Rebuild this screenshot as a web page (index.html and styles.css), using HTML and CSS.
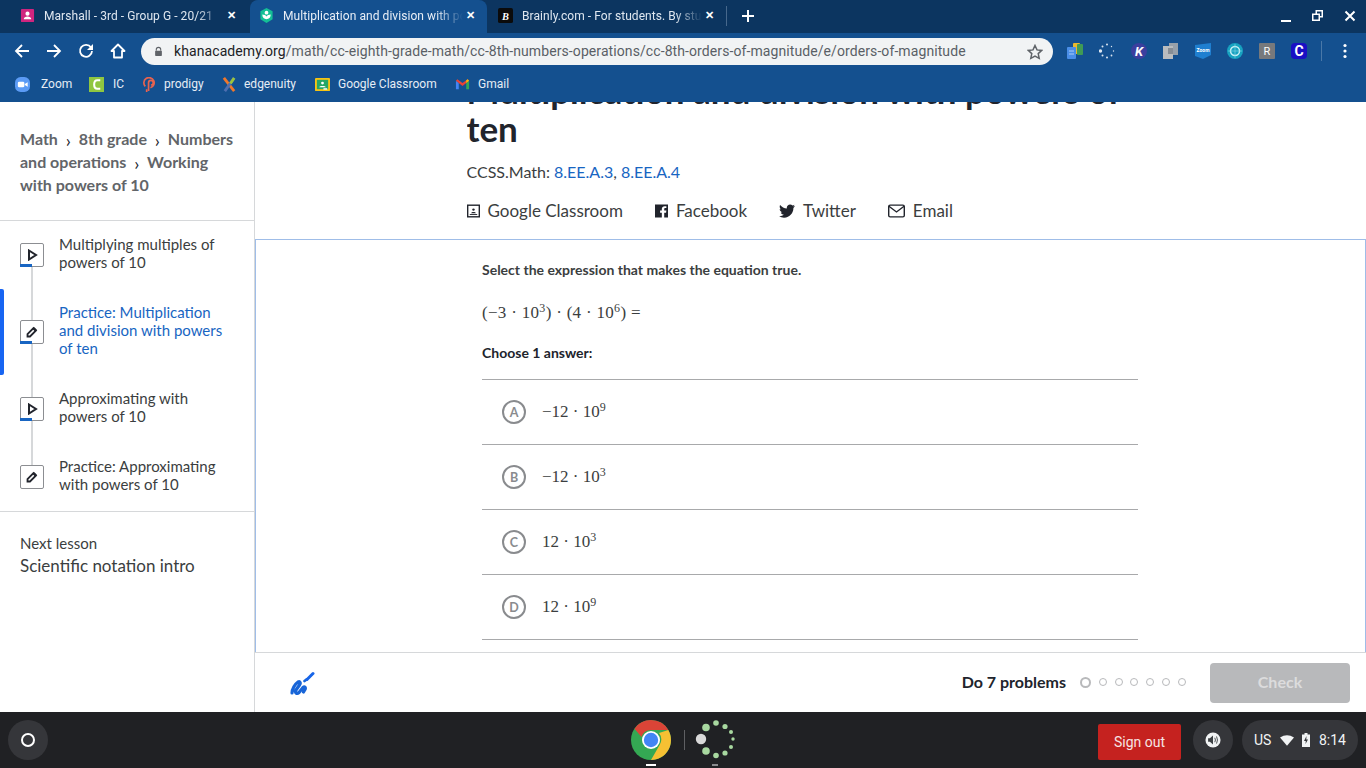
FILE: index.html
```html
<!DOCTYPE html>
<html lang="en">
<head>
  <meta charset="UTF-8">
  <title>Multiplication and division with powers of ten</title>
  <link rel="stylesheet" href="styles.css">
</head>
<body>
  <header class="browser">
    <div class="tabStrip">
      <div class="tab tabFirst">
        <svg class="favicon" viewBox="0 0 16 16"><rect x="1" y="1" width="14" height="14" rx="1" fill="#d0257f"/><circle cx="8" cy="6" r="2.2" fill="#fff"/><path d="M4 12c0-2 2-3 4-3s4 1 4 3z" fill="#fff"/></svg>
        <span class="tabTitle">Marshall - 3rd - Group G - 20/21</span>
        <span class="tabClose">✕</span>
      </div>
      <div class="tab tabActive">
        <svg class="favicon" viewBox="0 0 16 16"><path d="M8 0l6.500 3.500v8.500L8 16l-6.500-4V3.500z" fill="#14bf96"/><circle cx="8" cy="5" r="2" fill="#fff"/><path d="M3.500 7c0 3 2 5 4.500 5s4.500-2 4.500-5c-2 0-4 1-4.500 2-.5-1-2.500-2-4.500-2z" fill="#fff"/></svg>
        <span class="tabTitle">Multiplication and division with powers of ten</span>
        <span class="tabClose">✕</span>
      </div>
      <div class="tab tabLast">
        <svg class="favicon" viewBox="0 0 16 16"><rect width="16" height="16" rx="2" fill="#0b0b0b"/><text x="8" y="12.500" class="faviconLetter">B</text></svg>
        <span class="tabTitle">Brainly.com - For students. By students.</span>
        <span class="tabClose">✕</span>
      </div>
      <span class="tabDivider"></span>
      <svg class="newTab" viewBox="0 0 14 14"><path d="M7 1v12M1 7h12" stroke="#fff" stroke-width="2"/></svg>
      <div class="windowControls">
        <svg class="minimize" viewBox="0 0 12 12"><path d="M1 11h10" stroke="#fff" stroke-width="2"/></svg>
        <svg viewBox="0 0 12 12"><path d="M3.500 0H11v7.500H8V11H0V3.500h3.500zM5 1.500v2h3v2.500h1.500V1.500zM1.500 5v4.500h5V5z" fill="#fff" fill-rule="evenodd"/></svg>
        <svg viewBox="0 0 12 12"><path d="M1.500 1.500l9 9M10.500 1.500l-9 9" stroke="#fff" stroke-width="2"/></svg>
      </div>
    </div>

    <div class="toolbar">
      <div class="navButtons">
        <svg viewBox="0 0 16 16"><path d="M15 8H2M8 2L2 8l6 6" fill="none" stroke="#fff" stroke-width="1.800"/></svg>
        <svg viewBox="0 0 16 16"><path d="M1 8h13M8 2l6 6-6 6" fill="none" stroke="#fff" stroke-width="1.800"/></svg>
        <svg viewBox="0 0 16 16"><path d="M13 4.500A6 6 0 1 0 14 8" fill="none" stroke="#fff" stroke-width="1.800"/><path d="M15 1v6H9z" fill="#fff"/></svg>
        <svg viewBox="0 0 16 16"><path d="M8 1.500L1.500 8H4v6.500h8V8h2.500z" fill="none" stroke="#fff" stroke-width="1.800" stroke-linejoin="round"/></svg>
      </div>
      <div class="addressBar">
        <svg class="lock" viewBox="0 0 12 14"><path d="M3 6V4.500a3 3 0 0 1 6 0V6" fill="none" stroke="#5f6368" stroke-width="1.400"/><rect x="1.500" y="6" width="9" height="7" rx="1" fill="#5f6368"/></svg>
        <span class="url"><b>khanacademy.org</b>/math/cc-eighth-grade-math/cc-8th-numbers-operations/cc-8th-orders-of-magnitude/e/orders-of-magnitude</span>
        <svg class="star" viewBox="0 0 16 16"><path d="M8 1.500l2 4.400 4.800.5-3.600 3.200 1 4.700L8 12l-4.200 2.300 1-4.700L1.200 6.400 6 5.900z" fill="none" stroke="#5f6368" stroke-width="1.500"/></svg>
      </div>
      <div class="extensions">
        <svg viewBox="0 0 16 16"><rect x="6" y="0" width="7" height="11" rx="1" fill="#e8b92e"/><rect x="10" y="1" width="6" height="11" rx="1" fill="#3f9a55"/><rect x="0" y="4" width="9" height="12" rx="1" fill="#4a8ee8"/><path d="M2 8h5M2 11h5" stroke="#a9c9f5"/></svg>
        <svg viewBox="0 0 16 16"><g fill="#dbe5f0"><circle cx="8" cy="1.500" r="1"/><circle cx="12.500" cy="3.500" r=".7"/><circle cx="14.500" cy="8" r=".7"/><circle cx="12.500" cy="12.500" r=".9"/><circle cx="8" cy="14.500" r="1"/><circle cx="3.500" cy="12.500" r="1"/><circle cx="1.500" cy="8" r="1.700"/><circle cx="3.500" cy="3.500" r="1"/></g></svg>
        <svg viewBox="0 0 16 16"><circle cx="8" cy="8" r="8" fill="#3b3f9e"/><text x="8" y="13" class="extLetter extItalic">K</text></svg>
        <svg viewBox="0 0 16 16"><rect x="6" y="0" width="9" height="12" fill="#97a0aa"/><rect x="0" y="3" width="10" height="13" fill="#b9bcbf"/><rect x="5" y="5" width="5" height="6" fill="#868d95"/></svg>
        <svg viewBox="0 0 16 16"><path d="M0 2l16-2v12l-8 4-8-3z" fill="#1f7fd0"/><text x="8" y="9" class="extTiny">Zoom</text></svg>
        <svg viewBox="0 0 16 16"><circle cx="8" cy="8" r="8" fill="#17a2c0"/><circle cx="8" cy="8" r="4.500" fill="none" stroke="#c6eef5" stroke-width="1.500"/><path d="M8 1v14M1 8h14" stroke="#7fd6e6" stroke-width=".6"/></svg>
        <svg viewBox="0 0 16 16"><rect width="16" height="16" rx="1" fill="#77797c"/><text x="8" y="12" class="extLetter">R</text></svg>
        <svg viewBox="0 0 16 16"><rect width="16" height="16" rx="4" fill="#1a0fc4"/><text x="8" y="13" class="extLetter extBold">C</text></svg>
      </div>
      <span class="toolbarDivider"></span>
      <svg class="menuDots" viewBox="0 0 4 16"><circle cx="2" cy="2.500" r="1.600" fill="#fff"/><circle cx="2" cy="8" r="1.600" fill="#fff"/><circle cx="2" cy="13.500" r="1.600" fill="#fff"/></svg>
    </div>

    <div class="bookmarks">
      <a class="bookmark bmZoom"><svg viewBox="0 0 16 16"><rect width="16" height="16" rx="6" fill="#5b9bf5"/><rect x="3" y="5" width="7" height="6" rx="1.500" fill="#fff"/><path d="M10.500 7.500l3-2v5l-3-2z" fill="#fff"/></svg>Zoom</a>
      <a class="bookmark bmIc"><svg viewBox="0 0 16 16"><rect width="16" height="16" fill="#8fc641"/><path d="M12 3.500H9Q5.500 3.500 5.500 8T9 12.500h3" fill="none" stroke="#fff" stroke-width="2.200"/></svg>IC</a>
      <a class="bookmark bmProdigy"><svg viewBox="0 0 16 16"><path d="M5 16V13M3.500 10A5.500 5.500 0 1 1 9 11.500" fill="none" stroke="#e8634f" stroke-width="1.800"/><path d="M7 15V6a2.500 2.500 0 1 1 2.500 2.500" fill="none" stroke="#e8634f" stroke-width="1.800"/></svg>prodigy</a>
      <a class="bookmark bmEdgenuity"><svg viewBox="0 0 16 16"><path d="M2 1l11 14" stroke="#f0772b" stroke-width="3"/><path d="M13 1L3 15" stroke="#4f6fb0" stroke-width="3"/><path d="M13 1L9 7" stroke="#9ac43c" stroke-width="3"/></svg>edgenuity</a>
      <a class="bookmark bmClassroom"><svg viewBox="0 0 16 16"><rect y="1" width="16" height="14" rx="1" fill="#f7c313"/><rect x="2" y="3" width="12" height="10" fill="#25a667"/><circle cx="8" cy="6.500" r="1.500" fill="#fff"/><path d="M4.500 11c0-2 7-2 7 0z" fill="#fff"/><rect x="9" y="12" width="4" height="1.500" fill="#fff"/></svg>Google Classroom</a>
      <a class="bookmark bmGmail"><svg viewBox="0 0 16 16"><path d="M1 13V4l3 2.500V13z" fill="#4285f4"/><path d="M12 13V6.500L15 4v9z" fill="#34a853"/><path d="M1 4l7 5.500L15 4l-1.500-1.500L8 6.500 2.500 2.500z" fill="#ea4335"/><path d="M12 6.500L15 4l-1.500-1.500L12 3.500z" fill="#fbbc04"/></svg>Gmail</a>
    </div>
  </header>

  <div class="page">
    <aside class="sidebar">
      <nav class="crumbs">Math <span class="crumbSep">›</span> 8th grade <span class="crumbSep">›</span> Numbers and operations <span class="crumbSep">›</span> Working with powers of 10</nav>
      <ul class="lessons">
        <li class="lesson lessonFirst">
          <span class="lessonIcon lessonProgress"><svg viewBox="0 0 12 12"><path d="M3 1.500L10 6l-7 4.500z" fill="none" stroke="#21242c" stroke-width="2"/></svg></span>
          <span>Multiplying multiples of powers of 10</span>
        </li>
        <li class="lesson lessonCurrent">
          <span class="lessonIcon lessonProgress"><svg viewBox="0 0 12 12"><path d="M1.500 10.500V8l6-6 2.500 2.500-6 6z" fill="none" stroke="#21242c" stroke-width="1.800"/><path d="M6.500 3L9 5.500 10.800 3.700 8.300 1.200z" fill="#21242c"/></svg></span>
          <span>Practice: Multiplication and division with powers of ten</span>
        </li>
        <li class="lesson">
          <span class="lessonIcon lessonProgress"><svg viewBox="0 0 12 12"><path d="M3 1.500L10 6l-7 4.500z" fill="none" stroke="#21242c" stroke-width="2"/></svg></span>
          <span>Approximating with powers of 10</span>
        </li>
        <li class="lesson lessonLast">
          <span class="lessonIcon"><svg viewBox="0 0 12 12"><path d="M1.500 10.500V8l6-6 2.500 2.500-6 6z" fill="none" stroke="#21242c" stroke-width="1.800"/><path d="M6.500 3L9 5.500 10.800 3.700 8.300 1.200z" fill="#21242c"/></svg></span>
          <span>Practice: Approximating with powers of 10</span>
        </li>
      </ul>
      <div class="nextLesson">
        <div class="nextLabel">Next lesson</div>
        <div class="nextTitle">Scientific notation intro</div>
      </div>
    </aside>

    <main class="content">
      <div class="intro">
        <h1 class="title">Multiplication and division with powers of ten</h1>
        <p class="standards">CCSS.Math: <a>8.EE.A.3</a>, <a>8.EE.A.4</a></p>
        <div class="share">
          <a class="shareLink"><svg viewBox="0 0 14 14"><rect x=".75" y=".75" width="12.500" height="12.500" fill="none" stroke="#21242c" stroke-width="1.500"/><circle cx="7" cy="5.500" r="1.300" fill="#21242c"/><path d="M4.500 9.500c0-2 5-2 5 0z" fill="#21242c"/><path d="M3 10.800h8" stroke="#21242c"/></svg>Google Classroom</a>
          <a class="shareLink"><svg viewBox="1 1 12 12"><path d="M1 1h12v12H9.500V8.500h1.700l.3-2H9.500V5.300c0-.6.3-1 1-1h1V2.500H10C8.300 2.500 7.300 3.600 7.300 5.200v1.300H5.700v2h1.600V13H1z" fill="#21242c"/></svg>Facebook</a>
          <a class="shareLink shareTwitter"><svg viewBox="0 0 16 14"><path d="M16 2c-.6.3-1.200.4-1.900.5.700-.4 1.200-1 1.400-1.800-.6.400-1.300.6-2 .8C12.900.9 12 .5 11.100.5 9.300.5 7.800 2 7.800 3.800c0 .3 0 .5.100.8C5.200 4.400 2.700 3.100 1.100 1.100c-.3.500-.4 1-.4 1.700 0 1.100.6 2.100 1.500 2.700-.5 0-1-.2-1.500-.4 0 1.600 1.100 2.900 2.600 3.200-.5.100-1 .2-1.500.1.400 1.300 1.600 2.200 3.100 2.300-1.400 1-3 1.600-4.900 1.400C1.500 13.100 3.300 13.700 5 13.700c6 0 9.400-5 9.400-9.400v-.4c.6-.5 1.200-1.100 1.600-1.900z" fill="#21242c"/></svg>Twitter</a>
          <a class="shareLink shareEmail"><svg viewBox="0 0 18 14"><rect x=".75" y=".75" width="16.500" height="12.500" rx="1.500" fill="none" stroke="#21242c" stroke-width="1.500"/><path d="M1 2l8 6 8-6" fill="none" stroke="#21242c" stroke-width="1.500"/></svg>Email</a>
        </div>
      </div>

      <section class="exercise">
        <div class="problem">
          <p class="prompt">Select the expression that makes the equation true.</p>
          <p class="math equation">(−3 · 10<sup>3</sup>) · (4 · 10<sup>6</sup>) =</p>
          <p class="prompt choosePrompt">Choose 1 answer:</p>
          <ul class="choices">
            <li class="choice"><span class="choiceLetter">A</span><span class="math">−12 · 10<sup>9</sup></span></li>
            <li class="choice"><span class="choiceLetter">B</span><span class="math">−12 · 10<sup>3</sup></span></li>
            <li class="choice"><span class="choiceLetter">C</span><span class="math">12 · 10<sup>3</sup></span></li>
            <li class="choice"><span class="choiceLetter">D</span><span class="math">12 · 10<sup>9</sup></span></li>
          </ul>
        </div>
      </section>

      <footer class="taskBar">
        <svg class="scratchpad" viewBox="0 0 26 26"><path d="M3 23C3 19 6 14 9 12c2-1 3 1 1.500 3L7 20c-1.500 3 1 4.500 3 2.500l4-5c1.500-1.500 3 0 2 2L14.500 22" fill="none" stroke="#1865d8" stroke-width="3.200" stroke-linecap="round" stroke-linejoin="round"/><path d="M15.500 11l2-1.500" stroke="#1865d8" stroke-width="2.800" stroke-linecap="round"/><path d="M18 9.500l6-6" stroke="#1865e8" stroke-width="3" stroke-linecap="round"/></svg>
        <strong class="taskLabel">Do 7 problems</strong>
        <div class="dots">
          <span class="dot dotCurrent"></span><span class="dot"></span><span class="dot"></span><span class="dot"></span><span class="dot"></span><span class="dot"></span><span class="dot"></span>
        </div>
        <button class="checkButton">Check</button>
      </footer>
    </main>
  </div>

  <footer class="shelf">
    <div class="shelfLeft"><span class="launcher"><span class="launcherRing"></span></span></div>
    <div class="shelfApps">
      <span class="shelfApp appActive">
        <svg viewBox="0 0 40 40"><circle cx="20" cy="20" r="20" fill="#34a853"/><path d="M20 0a20 20 0 0 1 17.300 10H20a10 10 0 0 0-9.500 7L3.500 8.700A20 20 0 0 1 20 0z" fill="#db4437"/><path d="M37.300 10A20 20 0 0 1 20 40l8.600-15A10 10 0 0 0 28 13z" fill="#f6c033"/><circle cx="20" cy="20" r="9" fill="#fff"/><circle cx="20" cy="20" r="7.200" fill="#4285f4"/></svg>
      </span>
      <span class="shelfDivider"></span>
      <span class="shelfApp appSpinner">
        <svg viewBox="0 0 40 40"><g fill="#a8d8a0"><circle cx="21" cy="3" r="2.800"/><circle cx="30" cy="6.500" r="2.600"/><circle cx="36" cy="12" r="2"/><circle cx="38" cy="19" r="1.700"/><circle cx="36" cy="27" r="2"/><circle cx="30" cy="33" r="2.600"/><circle cx="21" cy="35.500" r="2.800"/><circle cx="11" cy="31" r="3.800"/><circle cx="11" cy="7.500" r="3.800"/></g><circle cx="6" cy="19" r="5.200" fill="#d9d9d9"/></svg>
      </span>
    </div>
    <div class="shelfTray">
      <button class="signOut">Sign out</button>
      <span class="trayRound"><svg viewBox="0 0 18 18"><circle cx="9" cy="9" r="8.500" fill="#f1f3f4"/><path d="M3.500 7h2l3.500-3v10l-3.500-3h-2z" fill="#3c4043"/><path d="M11 6.500q1.500 2.500 0 5M13 5q2 4 0 8" fill="none" stroke="#3c4043"/></svg></span>
      <div class="trayStatus">
        <span>US</span>
        <svg class="trayWifi" viewBox="0 0 16 12"><path d="M0 2.500Q8-2.500 16 2.500L8 12z" fill="#f1f3f4"/></svg>
        <svg class="trayBattery" viewBox="0 0 8 14"><path d="M2.500 0h3v1.500H8V14H0V1.500h2.500z" fill="#f1f3f4"/><path d="M4.500 3L2 8h1.800l-.3 3L6 6.500H4.300z" fill="#35363a"/></svg>
        <span>8:14</span>
      </div>
    </div>
  </footer>
</body>
</html>
```

FILE: styles.css
```css
* {
  box-sizing: border-box;
  margin: 0;
  padding: 0;
}
body {
  width: 1366px;
  height: 768px;
  overflow: hidden;
  display: flex;
  flex-direction: column;
  background-color: #fff;
  font-family: Lato, "Noto Sans", sans-serif;
  color: #21242c;
}
ul {
  list-style: none;
}
svg {
  display: block;
  flex-shrink: 0;
}

/* browser chrome */
.browser {
  flex: 0 0 102px;
  background-color: #14508f;
  font-family: Roboto, sans-serif;
  color: #fff;
  position: relative;
  z-index: 2;
}
.tabStrip {
  height: 33px;
  display: flex;
  align-items: center;
  background-color: #0c3560;
}
.tab {
  height: 33px;
  width: 238px;
  padding: 0 12px 2px 20px;
  display: flex;
  align-items: center;
  font-size: 12px;
  letter-spacing: .06px;
  color: #dfe7f0;
}
.tabFirst {
  width: 250px;
  padding-right: 10px;
}
.tabActive {
  width: 237px;
  padding: 0 8px 2px 9px;
  background-color: #14508f;
  border-radius: 8px 8px 0 0;
  color: #e8eef6;
}
.tabLast {
  width: 239px;
  padding: 0 8px 2px 11px;
}
.favicon {
  width: 15px;
  height: 15px;
  margin-right: 9px;
}
.faviconLetter {
  font: italic 700 11px "Liberation Serif", serif;
  fill: #fff;
  text-anchor: middle;
}
.tabTitle {
  flex: 1;
  overflow: hidden;
  white-space: nowrap;
  -webkit-mask-image: linear-gradient(to right, #000 85%, transparent);
  mask-image: linear-gradient(to right, #000 85%, transparent);
}
.tabClose {
  width: 16px;
  text-align: center;
  font-size: 11px;
  font-weight: 700;
  color: #fff;
}
.tabDivider {
  width: 1px;
  height: 20px;
  margin-bottom: 2px;
  background-color: #47688c;
}
.newTab {
  width: 14px;
  height: 14px;
  margin: 0 0 2px 14px;
}
.windowControls {
  margin-left: auto;
  padding: 0 10px 2px 0;
  display: flex;
  gap: 20px;
}
.windowControls svg {
  width: 12px;
  height: 12px;
}

.toolbar {
  height: 37px;
  padding-bottom: 1px;
  display: flex;
  align-items: center;
}
.navButtons {
  width: 141px;
  padding-left: 14px;
  display: flex;
  gap: 16px;
}
.navButtons svg {
  width: 16px;
  height: 16px;
}
.addressBar {
  width: 912px;
  height: 27px;
  margin-top: 1px;
  padding: 0 10px 0 13px;
  display: flex;
  align-items: center;
  background-color: #f1f3f4;
  border-radius: 14px;
  font-size: 14px;
  letter-spacing: .09px;
  color: #5a5f66;
}
.lock {
  width: 9px;
  height: 11px;
  margin-right: 11px;
}
.url {
  flex: 1;
  padding-bottom: 1px;
  white-space: nowrap;
  overflow: hidden;
}
.url b {
  font-weight: 400;
  color: #202124;
}
.star {
  width: 16px;
  height: 16px;
}
.extensions {
  margin-left: 14px;
  display: flex;
  gap: 16px;
}
.extensions svg {
  width: 16px;
  height: 16px;
}
.extLetter {
  font: 400 11px Roboto, sans-serif;
  fill: #fff;
  text-anchor: middle;
}
.extItalic {
  font-weight: 700;
  font-style: italic;
  font-size: 13px;
}
.extBold {
  font-weight: 700;
  font-size: 14px;
}
.extTiny {
  font: 700 5px Roboto, sans-serif;
  fill: #fff;
  text-anchor: middle;
}
.toolbarDivider {
  width: 1px;
  height: 20px;
  margin-left: 14px;
  background-color: #4a78a8;
}
.menuDots {
  width: 4px;
  height: 16px;
  margin-left: 21px;
}

.bookmarks {
  height: 32px;
  padding: 0 0 4px 15px;
  display: flex;
  align-items: center;
  font-size: 12px;
  color: #e6edf5;
}
.bookmark {
  display: flex;
  align-items: center;
  white-space: nowrap;
}
.bookmark svg {
  width: 15px;
  height: 15px;
  margin-right: 11px;
}
.bmZoom {
  width: 74px;
}
.bmIc {
  width: 53px;
}
.bmIc svg {
  margin-right: 9px;
}
.bmProdigy {
  width: 80px;
}
.bmProdigy svg {
  margin-right: 7px;
}
.bmEdgenuity {
  width: 93px;
}
.bmEdgenuity svg {
  margin-right: 7px;
}
.bmClassroom {
  width: 140px;
}
.bmClassroom svg {
  margin-right: 8px;
}
.bmGmail svg {
  margin-right: 8px;
}

/* page */
.page {
  flex: 1;
  min-height: 0;
  display: flex;
}
.sidebar {
  width: 255px;
  flex-shrink: 0;
  border-right: 1px solid #d6d8da;
  color: #3b3e40;
}
.crumbs {
  height: 119px;
  padding: 25px 20px 0;
  font-size: 16px;
  font-weight: 700;
  line-height: 23px;
  color: #626569;
  border-bottom: 1px solid #d6d8da;
}
.crumbSep {
  margin: 0 4px;
  vertical-align: -2px;
  line-height: 0;
  font-size: 18px;
  font-weight: 400;
  color: #21242c;
}
.lessons {
  border-bottom: 1px solid #d6d8da;
}
.lesson {
  padding: 14px 24px 18px 59px;
  min-height: 68px;
  display: flex;
  align-items: center;
  position: relative;
  font-size: 15px;
  line-height: 18px;
}
.lesson::before {
  content: "";
  position: absolute;
  left: 31px;
  top: 0;
  bottom: 0;
  width: 2px;
  background-color: #d6d8da;
}
.lessonFirst::before {
  top: 50%;
}
.lessonLast::before {
  bottom: 50%;
}
.lessonCurrent {
  color: #1865c2;
}
.lessonCurrent::after {
  content: "";
  position: absolute;
  left: 0;
  top: 0;
  bottom: 0;
  width: 4px;
  background-color: #1865f2;
  border-radius: 0 2px 2px 0;
}
.lessonIcon {
  position: absolute;
  left: 20px;
  top: 50%;
  margin-top: -12px;
  width: 24px;
  height: 24px;
  display: flex;
  align-items: center;
  justify-content: center;
  background-color: #fff;
  border: 1px solid #8c8e92;
  border-radius: 2px;
  z-index: 1;
}
.lessonIcon svg {
  width: 12px;
  height: 12px;
}
.lessonProgress::after {
  content: "";
  position: absolute;
  left: -1px;
  bottom: -1px;
  width: 12px;
  height: 3px;
  background-color: #1865c2;
}
.nextLesson {
  padding: 21px 20px 0;
}
.nextLabel {
  font-size: 15px;
  line-height: 21px;
}
.nextTitle {
  font-size: 17px;
  line-height: 24px;
}

.content {
  flex: 1;
  min-width: 0;
  display: flex;
  flex-direction: column;
}
.intro {
  width: 688px;
  height: 137px;
  margin: 0 auto;
  overflow: hidden;
  flex-shrink: 0;
}
.title {
  margin-top: -31px;
  font-size: 35px;
  font-weight: 700;
  line-height: 38px;
  color: #21242c;
}
.standards {
  margin-top: 14px;
  font-size: 16px;
  line-height: 22px;
  color: #3b3e40;
}
.standards a {
  color: #1865c2;
}
.share {
  margin-top: 16px;
  display: flex;
  gap: 32px;
  font-size: 17px;
  line-height: 24px;
  color: #3b3e40;
}
.shareLink {
  display: flex;
  align-items: center;
  gap: 8px;
}
.shareLink svg {
  width: 13px;
  height: 14px;
}
.shareTwitter svg {
  width: 16px;
}
.shareEmail svg {
  width: 17px;
}

.exercise {
  flex: 1;
  min-height: 0;
  overflow: hidden;
  border: 1px solid #9fbde8;
  border-bottom: none;
}
.problem {
  width: 656px;
  margin: 0 auto;
  padding-top: 20px;
  position: relative;
  left: -.5px;
}
.prompt {
  font-size: 14px;
  font-weight: 700;
  line-height: 20px;
  color: #3b3e40;
}
.equation {
  margin-top: 21px;
  letter-spacing: .3px;
}
.choosePrompt {
  margin-top: 18px;
  color: #21242c;
}
.math {
  font-family: "Liberation Serif", serif;
  font-size: 17px;
  line-height: 24px;
  color: #3b3e40;
  white-space: nowrap;
}
.math sup {
  font-size: 12px;
  line-height: 0;
  vertical-align: 6px;
}
.choices {
  margin-top: 16px;
  border-top: 1px solid #a8a9ab;
}
.choice {
  height: 65px;
  padding-left: 20px;
  display: flex;
  align-items: center;
  gap: 16px;
  border-bottom: 1px solid #a8a9ab;
}
.choiceLetter {
  width: 24px;
  height: 24px;
  display: flex;
  align-items: center;
  justify-content: center;
  border: 2px solid #898b8e;
  border-radius: 50%;
  font-size: 12.500px;
  font-weight: 700;
  color: #898b8e;
}

.taskBar {
  height: 60px;
  flex-shrink: 0;
  padding: 0 16px 0 34px;
  display: flex;
  align-items: center;
  border-top: 1px solid #d6d8da;
}
.scratchpad {
  width: 26px;
  height: 26px;
  margin-right: auto;
}
.taskLabel {
  margin-bottom: 2px;
  font-size: 16px;
  font-weight: 700;
  color: #21242c;
}
.dots {
  margin: 0 0 1px 14px;
  width: 106px;
  display: flex;
  align-items: center;
  justify-content: space-between;
}
.dot {
  width: 8px;
  height: 8px;
  border: 1.500px solid #b8b9bb;
  border-radius: 50%;
}
.dotCurrent {
  width: 11px;
  height: 11px;
  border: 2px solid #b8b9bb;
}
.checkButton {
  width: 140px;
  height: 40px;
  margin-left: 24px;
  padding-bottom: 2px;
  border: none;
  border-radius: 4px;
  background-color: #b8b9bb;
  font-family: Lato, sans-serif;
  font-size: 16px;
  font-weight: 700;
  color: #dcdcdd;
}

/* chromeos shelf */
.shelf {
  flex: 0 0 56px;
  display: grid;
  grid-template-columns: 1fr auto 1fr;
  align-items: center;
  background-color: #202124;
  font-family: Roboto, sans-serif;
  color: #f1f3f4;
}
.shelfLeft {
  padding-left: 8px;
}
.launcher {
  width: 40px;
  height: 40px;
  display: flex;
  align-items: center;
  justify-content: center;
  background-color: #35363a;
  border-radius: 50%;
}
.launcherRing {
  width: 14px;
  height: 14px;
  border: 2px solid #fff;
  border-radius: 50%;
}
.shelfApps {
  display: flex;
  align-items: center;
}
.shelfApp {
  width: 40px;
  height: 40px;
  position: relative;
}
.shelfApp::after {
  content: "";
  position: absolute;
  left: 15px;
  bottom: -6px;
  width: 10px;
  height: 2px;
  background-color: #fff;
}
.appSpinner::after {
  width: 6px;
  left: 17px;
  background-color: #8a8b8e;
}
.shelfDivider {
  width: 1px;
  height: 20px;
  margin: 0 10px 0 13px;
  background-color: #5f6063;
}
.shelfTray {
  padding-right: 8px;
  display: flex;
  align-items: center;
  justify-content: flex-end;
  gap: 12px;
}
.signOut {
  width: 83px;
  height: 36px;
  margin-top: 4px;
  border: none;
  border-radius: 2px;
  background-color: #c5221f;
  font-family: Roboto, sans-serif;
  font-size: 14px;
  color: #f6e5e4;
}
.trayRound {
  width: 40px;
  height: 40px;
  display: flex;
  align-items: center;
  justify-content: center;
  background-color: #35363a;
  border-radius: 50%;
}
.trayRound svg {
  width: 16px;
  height: 16px;
}
.trayStatus {
  width: 116px;
  height: 40px;
  margin-left: -3px;
  padding: 0 12px;
  display: flex;
  align-items: center;
  justify-content: space-between;
  background-color: #35363a;
  border-radius: 20px;
  font-size: 14px;
}
.trayWifi {
  width: 14px;
  height: 11px;
}
.trayBattery {
  width: 8px;
  height: 14px;
}
```
